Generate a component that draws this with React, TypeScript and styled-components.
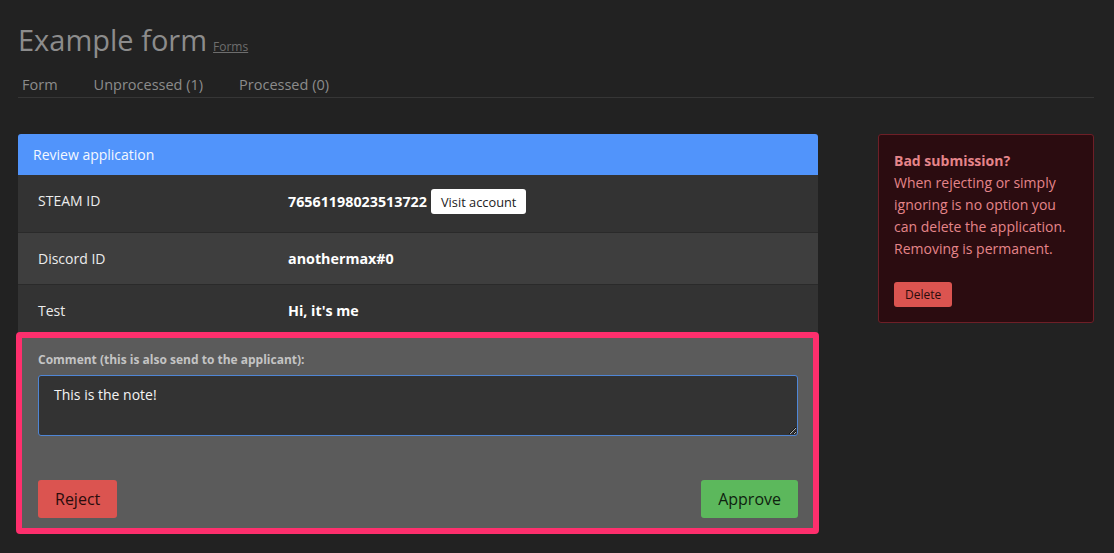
import React from "react";
import styled, { createGlobalStyle } from "styled-components";

const Global = createGlobalStyle`
  html, body { margin: 0; padding: 0; background: #222222; }
  body { font-family: "Open Sans", "Noto Sans", sans-serif; color: #ddd; }
  * { box-sizing: border-box; }
`;

const Page = styled.div`
  padding: 20px 20px 20px 18px;
`;

const TitleRow = styled.div`
  display: flex;
  align-items: baseline;
  gap: 6px;
  margin-bottom: 14px;
`;

const Title = styled.h1`
  margin: 0;
  font-size: 29px;
  font-weight: 400;
  line-height: 40px;
  color: #8c8c8c;
`;

const Crumb = styled.a`
  font-size: 12px;
  color: #6e6e6e;
  text-decoration: underline;
`;

const Tabs = styled.nav`
  display: flex;
  gap: 36px;
  padding: 0 0 2px 4px;
  border-bottom: 1px solid #363636;
`;

const Tab = styled.span`
  font-size: 14.5px;
  line-height: 21px;
  color: #8c8c8c;
`;

const Content = styled.div`
  display: flex;
  align-items: flex-start;
  gap: 60px;
  margin-top: 36px;
`;

const Card = styled.div`
  width: 800px;
  flex: none;
  display: flex;
  flex-direction: column;
`;

const CardHeader = styled.div`
  height: 41px;
  display: flex;
  align-items: center;
  padding: 0 15px;
  background: #5194fb;
  border-radius: 3px 3px 0 0;
  font-size: 14px;
  color: #f4f8ff;
`;

const Row = styled.div<{ $alt?: boolean; $first?: boolean }>`
  display: flex;
  align-items: flex-start;
  padding: ${(p) => (p.$first ? "15px 20px 18px" : "15px 20px")};
  background: ${(p) => (p.$alt ? "#3e3e3e" : "#333333")};
  border-top: ${(p) => (p.$first ? "none" : "1px solid #2a2a2a")};
  font-size: 14px;
  line-height: 21px;
`;

const Label = styled.div`
  width: 250px;
  flex: none;
  color: #ececec;
`;

const Value = styled.div<{ $withButton?: boolean }>`
  display: flex;
  align-items: center;
  gap: 4px;
  font-weight: 700;
  font-size: 14.3px;
  color: #ffffff;
  margin-top: ${(p) => (p.$withButton ? "-1px" : "0")};
`;

const LightButton = styled.button`
  height: 25px;
  padding: 0 10px;
  border: none;
  border-radius: 3px;
  background: #ffffff;
  color: #222;
  font-family: inherit;
  font-size: 12.8px;
`;

const Review = styled.div`
  margin: -4px -1px 0 -2px;
  position: relative;
  border: 6px solid #fe2f6d;
  border-radius: 4px;
  background: #5b5b5b;
  padding: 13px 15px 10px 16px;
  display: flex;
  flex-direction: column;
`;

const CommentLabel = styled.label`
  font-size: 12px;
  line-height: 17px;
  font-weight: 700;
  color: #c4c4c4;
  margin-bottom: 7px;
`;

const TextArea = styled.textarea`
  display: block;
  height: 61px;
  width: 100%;
  resize: vertical;
  background: #333333;
  border: 1px solid #4f86d6;
  border-radius: 3px;
  color: #f4f4f4;
  font-family: inherit;
  font-size: 14px;
  line-height: 20px;
  padding: 9px 15px;
  outline: none;
`;

const Actions = styled.div`
  display: flex;
  justify-content: space-between;
  margin-top: 44px;
`;

const ActionButton = styled.button<{ $tone: "danger" | "success"; $small?: boolean }>`
  height: ${(p) => (p.$small ? "25px" : "38px")};
  padding: ${(p) => (p.$small ? "0 11px" : "0 17px")};
  border: none;
  border-radius: 3px;
  background: ${(p) => (p.$tone === "danger" ? "#db5450" : "#5cb85c")};
  color: ${(p) => (p.$tone === "danger" ? "#2a0c0c" : "#0f220f")};
  font-family: inherit;
  font-size: ${(p) => (p.$small ? "12px" : "16px")};
`;

const Alert = styled.div`
  width: 216px;
  flex: none;
  padding: 15px;
  background: #2b0c10;
  border: 1px solid #6e1f27;
  border-radius: 3px;
  color: #e5858a;
  font-size: 14px;
  line-height: 22px;
  display: flex;
  flex-direction: column;
  align-items: flex-start;
`;

const AlertTitle = styled.strong`
  font-weight: 700;
`;

const AlertText = styled.p`
  margin: 0 0 22px;
`;

export default function App() {
  return (
    <>
      <Global />
      <Page>
        <TitleRow>
          <Title>Example form</Title>
          <Crumb>Forms</Crumb>
        </TitleRow>
        <Tabs>
          <Tab>Form</Tab>
          <Tab>Unprocessed (1)</Tab>
          <Tab>Processed (0)</Tab>
        </Tabs>
        <Content>
          <Card>
            <CardHeader>Review application</CardHeader>
            <Row $first>
              <Label>STEAM ID</Label>
              <Value $withButton>
                76561198023513722 <LightButton>Visit account</LightButton>
              </Value>
            </Row>
            <Row $alt>
              <Label>Discord ID</Label>
              <Value>anothermax#0</Value>
            </Row>
            <Row>
              <Label>Test</Label>
              <Value>Hi, it's me</Value>
            </Row>
            <Review>
              <CommentLabel>Comment (this is also send to the applicant):</CommentLabel>
              <TextArea defaultValue="This is the note!" />
              <Actions>
                <ActionButton $tone="danger">Reject</ActionButton>
                <ActionButton $tone="success">Approve</ActionButton>
              </Actions>
            </Review>
          </Card>
          <Alert>
            <AlertTitle>Bad submission?</AlertTitle>
            <AlertText>
              When rejecting or simply ignoring is no option you can delete the application.
              Removing is permanent.
            </AlertText>
            <ActionButton $tone="danger" $small>Delete</ActionButton>
          </Alert>
        </Content>
      </Page>
    </>
  );
}
